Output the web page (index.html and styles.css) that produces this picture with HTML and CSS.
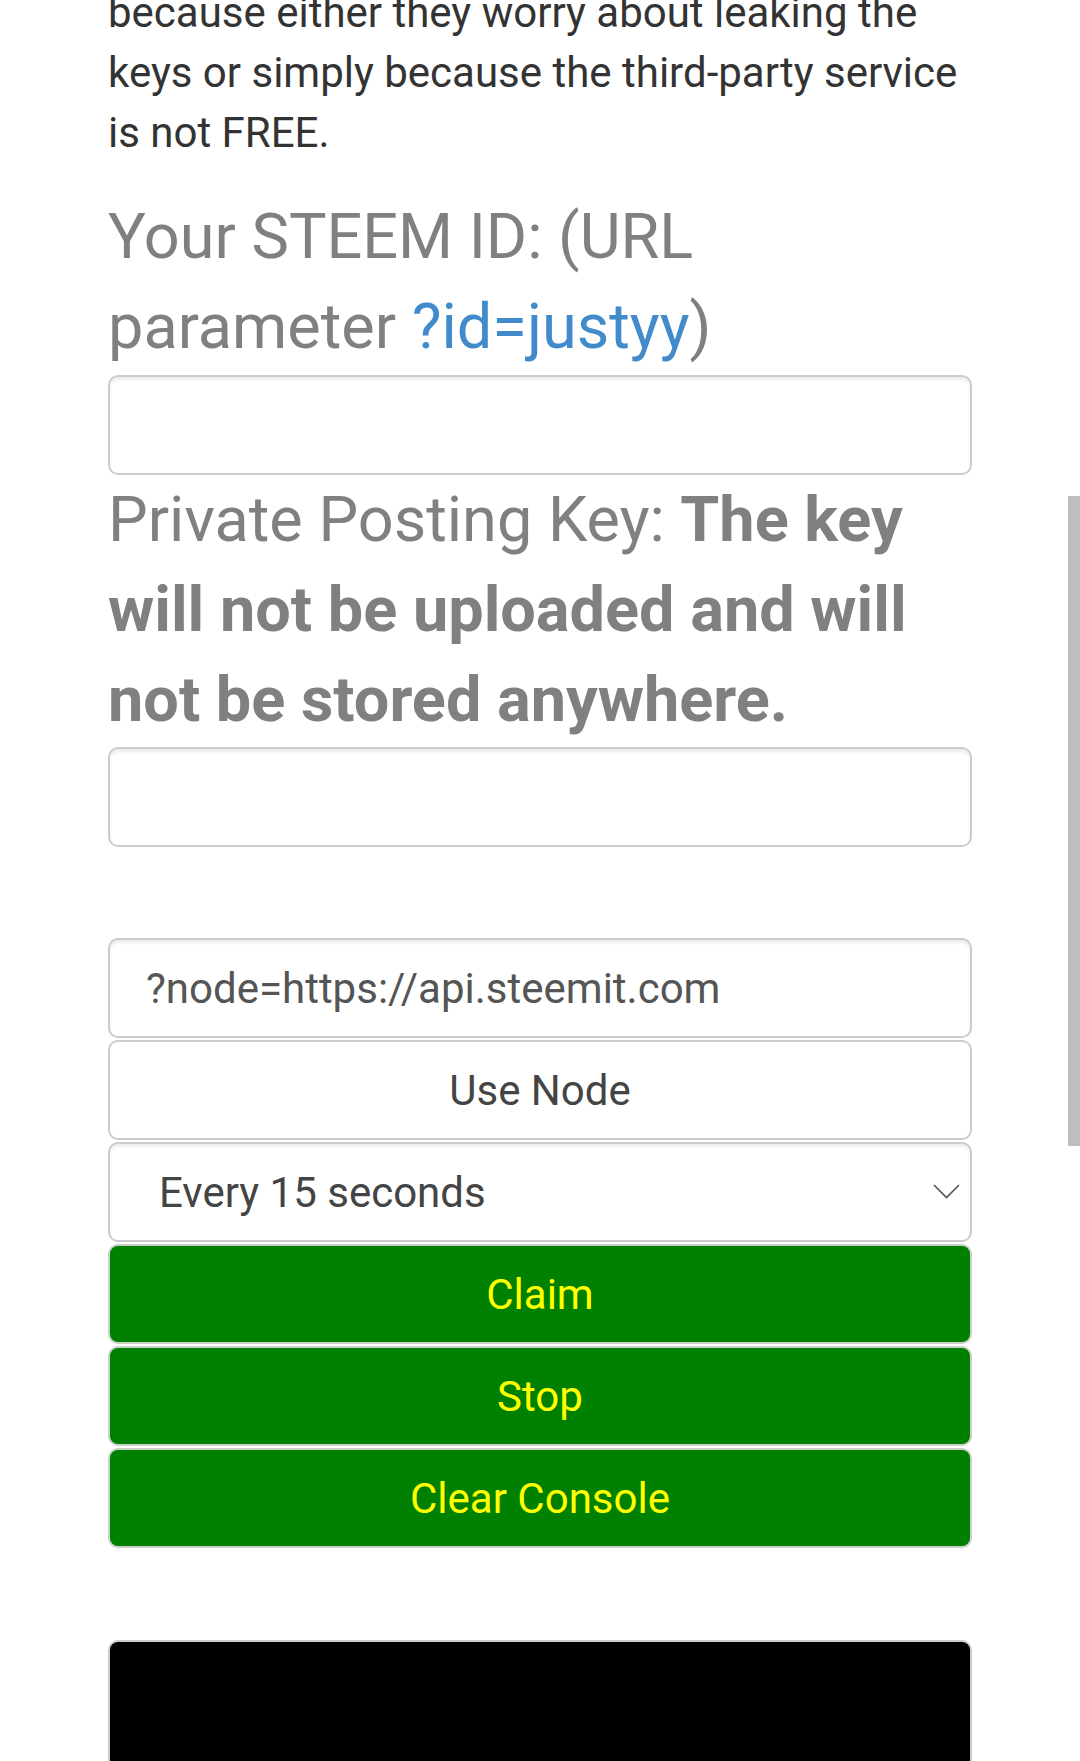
FILE: index.html
```html
<!DOCTYPE html>
<html lang="en">
<head>
<meta charset="utf-8">
<title>Steem Claim Rewards</title>
<link rel="stylesheet" href="styles.css">
</head>
<body>
<div class="page">
  <p class="intro">because either they worry about leaking the keys or simply because the third-party service is not FREE.</p>
  <h3 class="label label-first">Your STEEM ID: (URL parameter <a class="link" href="#">?id=justyy</a>)</h3>
  <input class="field field-id" type="text">
  <h3 class="label">Private Posting Key: <b>The key will not be uploaded and will not be stored anywhere.</b></h3>
  <input class="field field-key" type="password">
  <div class="controls">
    <input class="field field-node" type="text" value="?node=https://api.steemit.com">
    <button class="btn btn-plain" type="button">Use Node</button>
    <div class="select-wrap">
      <select class="field select">
        <option>Every 15 seconds</option>
      </select>
      <svg class="chevron" width="27" height="15" viewBox="0 0 27 15"><path d="M1 1 L13.5 13.5 L26 1" fill="none" stroke="#555" stroke-width="1.6"/></svg>
    </div>
    <button class="btn btn-green" type="button">Claim</button>
    <button class="btn btn-green" type="button">Stop</button>
    <button class="btn btn-green" type="button">Clear Console</button>
  </div>
  <div class="console"></div>
</div>
<div class="scrollbar"></div>
</body>
</html>
```
FILE: styles.css
```css
html, body {
  margin: 0;
  padding: 0;
  background: #fff;
}
body {
  font-family: Roboto, "Liberation Sans", Arial, sans-serif;
  color: #333;
  font-size: 42px;
  line-height: 60px;
}
.page {
  padding: 0 108px;
}
.intro {
  margin: -17px 0 0 0;
  font-size: 42px;
  line-height: 60px;
  color: #333;
}
.label {
  margin: 0;
  font-size: 63px;
  line-height: 90px;
  font-weight: 400;
  color: #808080;
}
.label b {
  font-weight: 700;
}
.label-first {
  margin-top: 29px;
}
.link {
  color: #428bca;
  text-decoration: none;
}
.field {
  display: block;
  box-sizing: border-box;
  width: 100%;
  height: 100px;
  margin: 0;
  border: 2px solid #ccc;
  border-radius: 10px;
  background: #fff;
  box-shadow: inset 0 3px 3px rgba(0, 0, 0, 0.075);
  font-family: Roboto, "Liberation Sans", Arial, sans-serif;
  font-size: 42px;
  color: #555;
  padding: 0 34px;
  outline: none;
}
.field-id {
  margin-top: 3px;
}
.field-key {
  margin-top: 2px;
}
.controls {
  margin-top: 91px;
  display: flex;
  flex-direction: column;
  gap: 2px;
}
.field-node {
  padding-left: 36px;
}
.select-wrap {
  position: relative;
}
.select {
  appearance: none;
  -webkit-appearance: none;
  padding-left: 49px;
  color: #444;
}
.chevron {
  position: absolute;
  right: 12px;
  top: 42px;
}
.btn {
  display: block;
  box-sizing: border-box;
  width: 100%;
  height: 100px;
  margin: 0;
  border-radius: 10px;
  font-family: Roboto, "Liberation Sans", Arial, sans-serif;
  font-size: 42px;
  text-align: center;
  padding: 0;
}
.btn-plain {
  background: #fff;
  color: #444;
  border: 2px solid #ccc;
}
.btn-green {
  background: #008000;
  color: #ffff00;
  border: 2px solid #c8d0c8;
}
.console {
  margin-top: 92px;
  height: 300px;
  background: #000;
  border: 2px solid #ccc;
  border-radius: 10px;
}
.scrollbar {
  position: fixed;
  right: 0;
  top: 496px;
  width: 12px;
  height: 650px;
  background: #bebebe;
}
```
